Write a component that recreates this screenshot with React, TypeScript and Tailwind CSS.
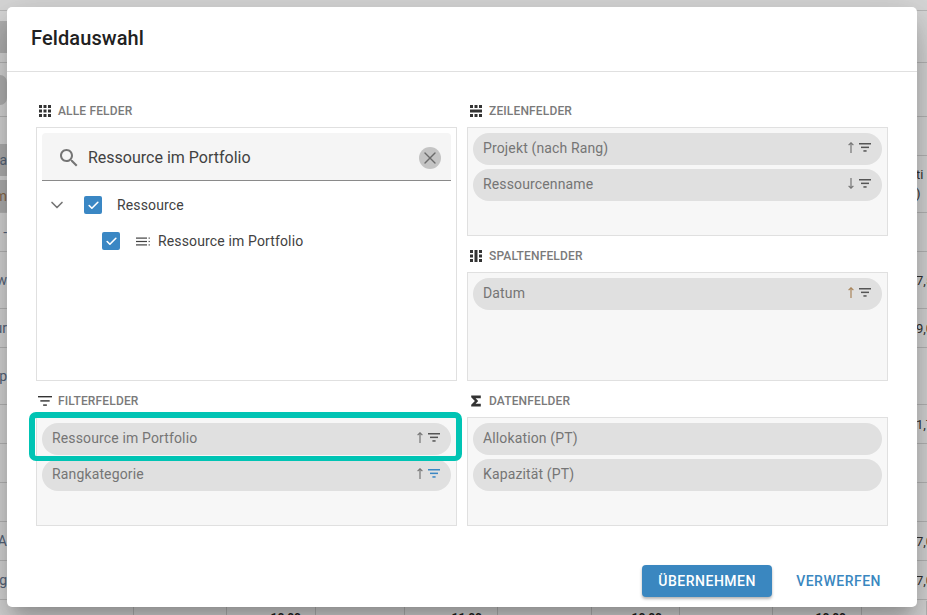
import React from 'react';
import { ChevronDown, X, Check } from 'lucide-react';

// strips of the table that stay visible left and right of the dialog
const leftRows = [
  { h: 11, t: '' },
  { h: 52, t: '', chip: 'top' },
  { h: 54, t: '', round: true },
  { h: 96, t: '', chips: true },
  { h: 39, t: '-' },
  { h: 57, t: 'w' },
  { h: 39, t: 'ur' },
  { h: 57, t: 'p' },
  { h: 39, t: '' },
  { h: 39, t: '' },
  { h: 39, t: '' },
  { h: 39, t: 'SA' },
  { h: 39, t: 'g' },
];

const rightRows = [
  { h: 11, t: '' },
  { h: 52, t: '' },
  { h: 54, t: '' },
  { h: 39, t: '' },
  { h: 57, t: 'ti', t2: ')' },
  { h: 39, t: '' },
  { h: 57, t: '7,5' },
  { h: 39, t: '9,0' },
  { h: 57, t: '' },
  { h: 39, t: '1,7' },
  { h: 39, t: '' },
  { h: 39, t: '' },
  { h: 39, t: '7,0' },
  { h: 39, t: '7,0' },
];

const bottomCols = [
  { w: 134, t: '', pr: 0 },
  { w: 93, t: '', pr: 0 },
  { w: 89, t: '10,00', pr: 14 },
  { w: 89, t: '', pr: 0 },
  { w: 93, t: '11,00', pr: 15 },
  { w: 94, t: '', pr: 0 },
  { w: 88, t: '10,00', pr: 17 },
  { w: 93, t: '', pr: 0 },
  { w: 89, t: '10,00', pr: 15 },
  { w: 65, t: '', pr: 0 },
];

const SectionLabel = ({ icon, text }: { icon: React.ReactNode; text: string }) => (
  <div className="h-9 flex items-center gap-[6px] pl-[2px] pt-[4px] text-xs font-medium tracking-[0.15px] text-[#7a7a7a] uppercase">
    <span className="w-[14px] h-[14px] flex items-center justify-center">{icon}</span>
    {text}
  </div>
);

const GridIcon = () => (
  <svg width="14" height="14" viewBox="0 0 14 14" fill="#333">
    {[1, 5.5, 10].map(y => [1, 5.5, 10].map(x => <rect key={`${x}-${y}`} x={x} y={y} width="3" height="3" />))}
  </svg>
);

const RowsIcon = () => (
  <svg width="14" height="14" viewBox="0 0 14 14" fill="#333">
    {[1, 5.5, 10].map(x => <rect key={x} x={x} y="1" width="3" height="3" />)}
    <rect x="1" y="5.5" width="12" height="3" />
    {[1, 5.5, 10].map(x => <rect key={x} x={x} y="10" width="3" height="3" />)}
  </svg>
);

const ColumnsIcon = () => (
  <svg width="14" height="14" viewBox="0 0 14 14" fill="#333">
    {[1, 5.5, 10].map(y => <rect key={y} x="1" y={y} width="3" height="3" />)}
    <rect x="5.5" y="1" width="3" height="12" />
    {[1, 5.5, 10].map(y => <rect key={y} x="10" y={y} width="3" height="3" />)}
  </svg>
);

const FilterIcon = ({ color = '#333', w = 14, bar = 1.2 }: { color?: string; w?: number; bar?: number }) => (
  <svg width={w} height={w * 0.75} viewBox="0 0 12 9" fill={color}>
    <rect x="0" y="0" width="12" height={bar} />
    <rect x="2" y="3.6" width="8" height={bar} />
    <rect x="4.4" y="7.2" width="3.2" height={bar} />
  </svg>
);

const SigmaIcon = () => (
  <svg width="14" height="14" viewBox="0 0 14 14" fill="#333">
    <path d="M2.2 1.5h9.6v2.8H6.6L9.2 7l-2.6 2.7h5.2v2.8H2.2v-1.8L5.9 7 2.2 3.3z" />
  </svg>
);

const ListIcon = () => (
  <svg width="15" height="9" viewBox="0 0 15 9" fill="#424242">
    <rect x="0" y="0.5" width="11" height="1.2" />
    <rect x="0" y="3.9" width="11" height="1.2" />
    <rect x="0" y="7.3" width="11" height="1.2" />
    <rect x="12.6" y="0.5" width="1.2" height="1.2" />
    <rect x="12.6" y="3.9" width="1.2" height="1.2" />
    <rect x="12.6" y="7.3" width="1.2" height="1.2" />
  </svg>
);

const SearchIcon = () => (
  <svg width="24" height="24" viewBox="0 0 24 24" fill="#757575" className="shrink-0">
    <path d="M15.5 14h-.79l-.28-.27C15.41 12.59 16 11.11 16 9.5 16 5.91 13.09 3 9.5 3S3 5.91 3 9.5 5.91 16 9.5 16c1.61 0 3.09-.59 4.23-1.57l.27.28v.79l5 4.99L20.49 19l-4.99-5zm-6 0C7.01 14 5 11.99 5 9.5S7.01 5 9.5 5 14 7.01 14 9.5 11.99 14 9.5 14z" />
  </svg>
);

const SortArrow = ({ dir, color = '#757575' }: { dir: 'up' | 'down'; color?: string }) => (
  <svg width="8" height="11" viewBox="0 0 8 11" fill="none" stroke={color} strokeWidth="1.2" className={dir === 'down' ? 'rotate-180' : ''}>
    <path d="M4 11V1M1.6 3.2 4 0.8l2.4 2.4" />
  </svg>
);

const CheckBox = () => (
  <span className="w-[18px] h-[18px] rounded-[2px] bg-[#3a87c4] flex items-center justify-center shrink-0">
    <Check size={13} strokeWidth={3} className="text-white" />
  </span>
);

const Pill = ({ label, sort, filterColor, arrowColor }: { label: string; sort?: 'up' | 'down'; filterColor?: string; arrowColor?: string }) => (
  <div className="h-8 rounded-full bg-[#e0e0e0] flex items-center justify-between pl-[10px] pr-[11px] text-sm tracking-[0.14px] text-[#757575]">
    <span className="-mt-[2px]">{label}</span>
    {sort && (
      <span className="flex items-center gap-1 -mt-[4px]">
        <SortArrow dir={sort} color={arrowColor} />
        <FilterIcon color={filterColor || '#555'} w={12} bar={1.5} />
      </span>
    )}
  </div>
);

const Panel = ({ children }: { children: React.ReactNode }) => (
  <div className="h-[109px] border border-[#e0e0e0] bg-[#f7f7f7] p-[5px] flex flex-col gap-1">{children}</div>
);

export default function App() {
  return (
    <div className="relative w-[927px] h-[615px] overflow-hidden bg-[#d8d8d8] font-['Roboto',sans-serif]">
      <div className="flex justify-between h-[601px] text-sm">
        <div className="w-[7px] flex flex-col text-[#56657a]">
          {leftRows.map((row, i) => (
            <div key={i} style={{ height: row.h }} className="border-b border-[#b8b8b8] flex flex-col justify-center items-end whitespace-nowrap shrink-0">
              {row.t}
              {row.chip && <div className="w-[7px] h-8 bg-[#b2b2b2]" />}
              {row.round && <div className="w-[7px] h-[30px] rounded-r-full bg-[#b4b4b4]" />}
              {row.chips && (
                <div className="w-[7px] flex flex-col gap-1 mt-[26px]">
                  <div className="h-8 bg-[#b2b2b2] flex items-center justify-end">Ra</div>
                  <div className="h-8 bg-[#b2b2b2] flex items-center justify-end text-[#8a6a4a]">m</div>
                </div>
              )}
            </div>
          ))}
        </div>
        <div className="w-[11px] flex flex-col text-[13px] text-[#333]">
          {rightRows.map((row, i) => (
            <div key={i} style={{ height: row.h }} className="border-b border-[#b8b8b8] flex flex-col justify-center overflow-hidden whitespace-nowrap leading-[19px] shrink-0">
              <div>{row.t}</div>
              {row.t2 && <div>{row.t2}</div>}
            </div>
          ))}
        </div>
      </div>
      <div className="h-[14px] flex text-xs font-bold text-[#222]">
        {bottomCols.map((col, i) => (
          <div key={i} style={{ width: col.w, paddingRight: col.pr }} className="border-r border-[#b8b8b8] text-right pt-[9px] leading-4 shrink-0">
            {col.t}
          </div>
        ))}
      </div>

      {/* dialog */}
      <div className="absolute left-[7px] top-[7px] w-[910px] h-[600px] bg-white rounded-[5px] flex flex-col shadow-[0_11px_15px_-7px_rgba(0,0,0,0.2),0_24px_38px_3px_rgba(0,0,0,0.14),0_9px_46px_8px_rgba(0,0,0,0.12)]">
        <div className="h-[65px] shrink-0 border-b border-[#e0e0e0] flex items-center px-6 pb-[3px] text-xl font-medium tracking-[0.1px] text-[#212121]">
          Feldauswahl
        </div>

        <div className="grid grid-cols-[421px_421px] gap-x-[10px] pl-[29px] pt-[19px]">
          <div className="flex flex-col">
            <SectionLabel icon={<GridIcon />} text="Alle Felder" />
            <div className="h-[254px] border border-[#e0e0e0] p-[5px]">
              <div className="h-[48px] bg-[#f5f5f5] rounded-t-[4px] border-b border-[#8a8a8a] flex items-center pl-[15px] pr-[10px] pt-[2px]">
                <SearchIcon />
                <span className="ml-[7px] flex-1 text-base text-[#424242]">Ressource im Portfolio</span>
                <span className="w-[22px] h-[22px] rounded-full bg-[#c4c4c4] flex items-center justify-center">
                  <X size={20} strokeWidth={1.6} className="text-[#6b6b6b]" />
                </span>
              </div>
              <div className="h-[36px] mt-[6px] flex items-center pl-[5px] text-sm tracking-[0.14px] text-[#424242]">
                <ChevronDown size={20} strokeWidth={2} className="text-[#757575]" />
                <span className="ml-[17px]"><CheckBox /></span>
                <span className="ml-[15px]">Ressource</span>
              </div>
              <div className="h-[36px] flex items-center pl-[60px] text-sm tracking-[0.14px] text-[#424242]">
                <CheckBox />
                <span className="ml-[16px]"><ListIcon /></span>
                <span className="ml-[7px]">Ressource im Portfolio</span>
              </div>
            </div>
            <SectionLabel icon={<FilterIcon />} text="Filterfelder" />
            <div className="relative">
              <Panel>
                <Pill label="Ressource im Portfolio" sort="up" />
                <Pill label="Rangkategorie" sort="up" filterColor="#3a87c4" />
              </Panel>
              <div className="absolute -left-[7px] -top-[5px] w-[433px] h-[49px] border-[6px] border-b-[5px] border-[#00c4b4] rounded-[7px]" />
            </div>
          </div>

          <div className="flex flex-col">
            <SectionLabel icon={<RowsIcon />} text="Zeilenfelder" />
            <Panel>
              <Pill label="Projekt (nach Rang)" sort="up" />
              <Pill label="Ressourcenname" sort="down" />
            </Panel>
            <SectionLabel icon={<ColumnsIcon />} text="Spaltenfelder" />
            <Panel>
              <Pill label="Datum" sort="up" arrowColor="#a8845a" />
            </Panel>
            <SectionLabel icon={<SigmaIcon />} text="Datenfelder" />
            <Panel>
              <Pill label="Allokation (PT)" />
              <Pill label="Kapazität (PT)" />
            </Panel>
          </div>
        </div>

        <div className="mt-auto flex justify-end items-center gap-2 pr-5 pb-[10px]">
          <button className="h-8 w-[130px] rounded bg-[#3a87c0] text-sm font-medium tracking-[0.5px] text-white uppercase shadow-[0_2px_3px_rgba(0,0,0,0.3)]">
            Übernehmen
          </button>
          <button className="h-8 px-4 rounded text-sm font-medium tracking-[0.5px] text-[#3a87c0] uppercase">Verwerfen</button>
        </div>
      </div>
    </div>
  );
}
